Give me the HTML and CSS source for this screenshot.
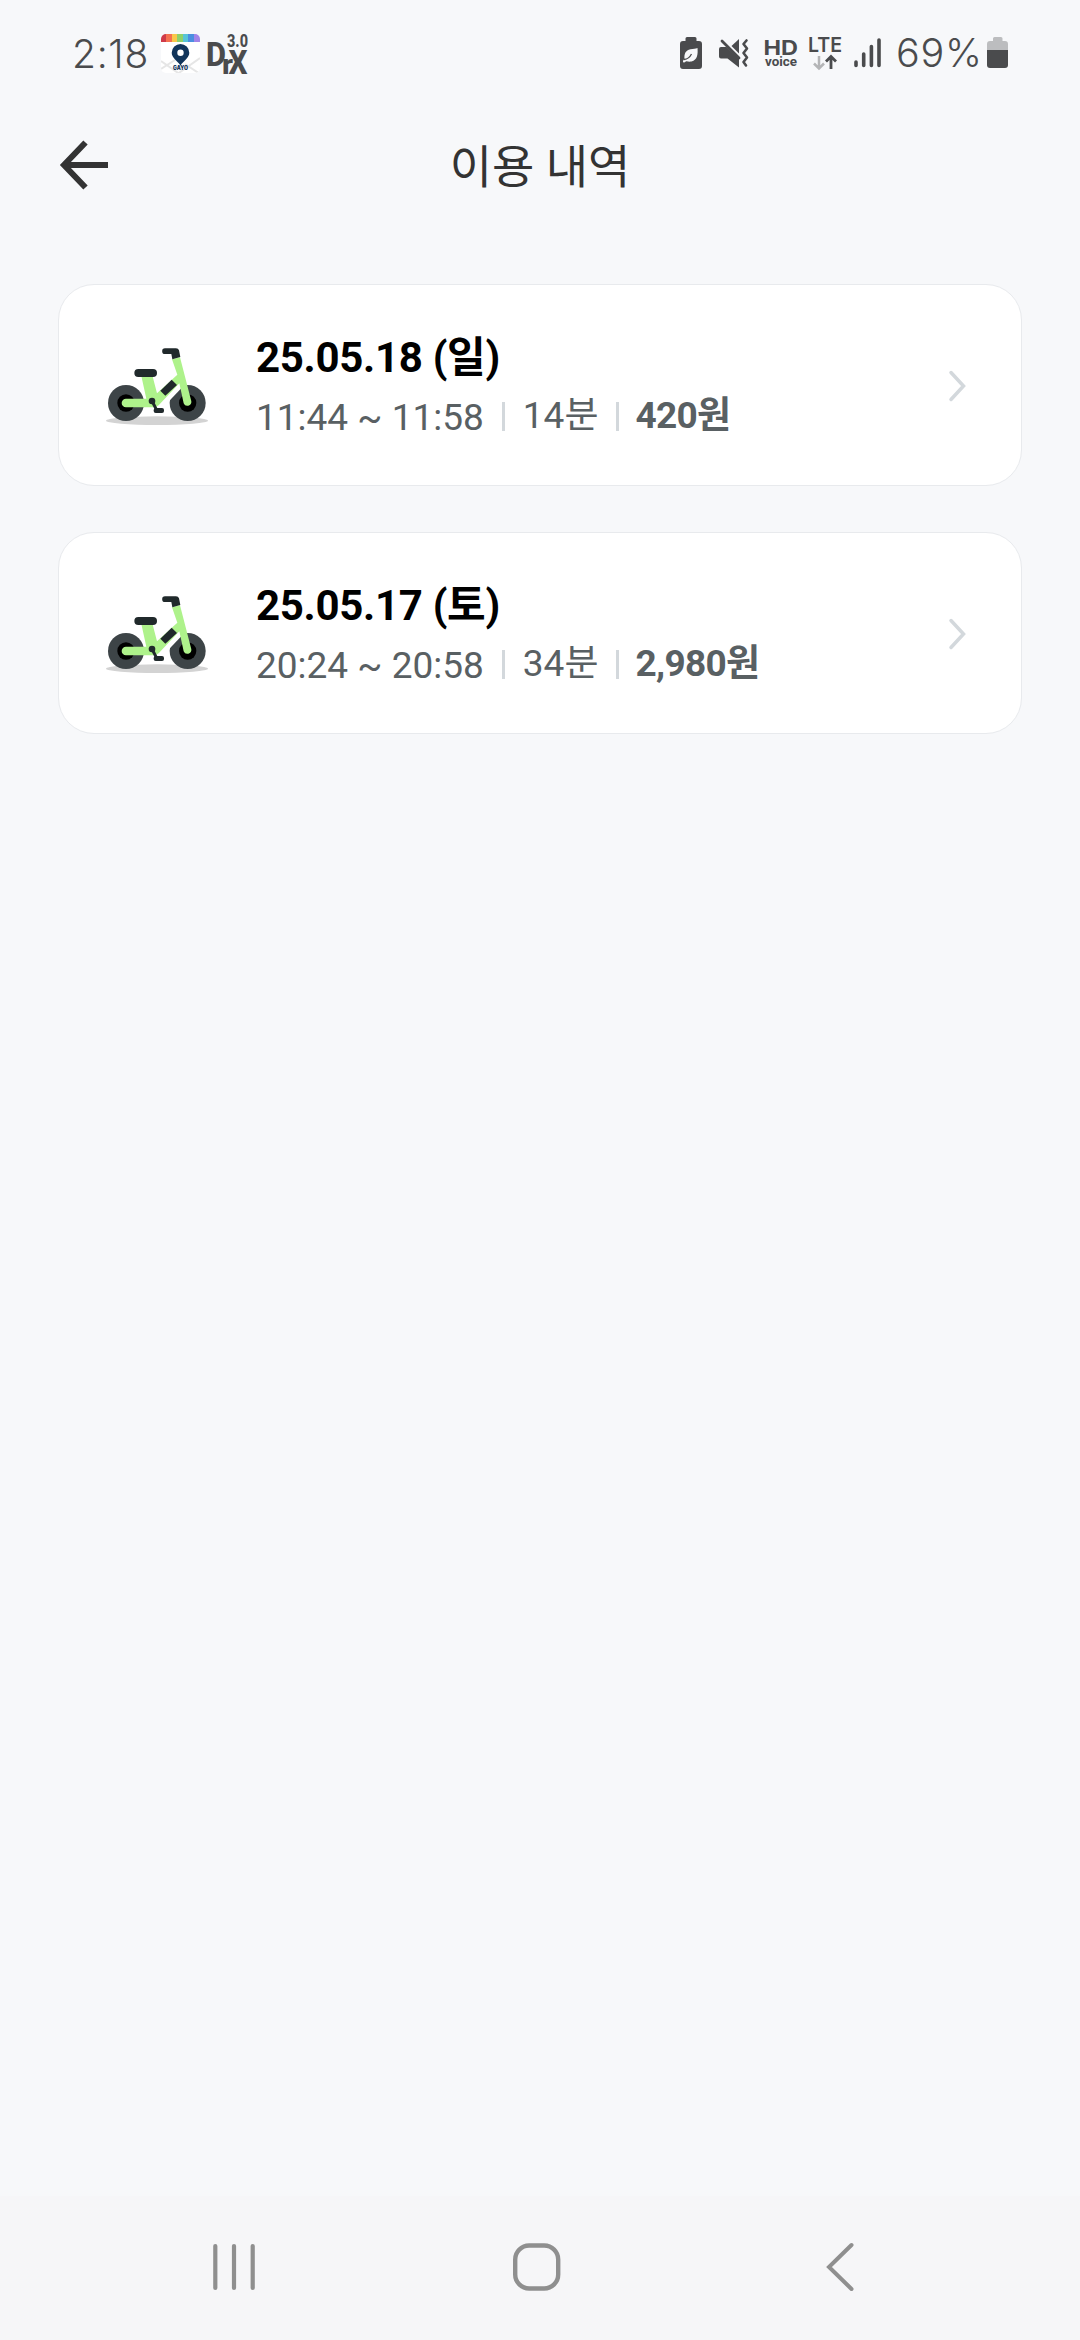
FILE: index.html
```html
<!DOCTYPE html>
<html lang="ko">
<head>
<meta charset="utf-8">
<title>이용 내역</title>
<link rel="stylesheet" href="styles.css">
</head>
<body>
<svg class="defs" width="0" height="0" aria-hidden="true">
  <symbol id="bike" viewBox="0 0 390 330">
    <ellipse cx="201" cy="272" rx="153" ry="13" fill="#d3d3d3"/>
    <circle cx="108" cy="219" r="54" fill="#3d4447"/>
    <circle cx="293" cy="219" r="54" fill="#3d4447"/>
    <circle cx="108" cy="219" r="26" fill="#000"/>
    <circle cx="293" cy="219" r="26" fill="#000"/>
    <path d="M192 222L262 148" stroke="#fff" stroke-width="34" fill="none" transform="translate(6 8)"/>
    <path d="M154 138L187 136L201 190L262 134L246 88L270 82L304 214A12 12 0 0 1 281 220L268 160L206 226Q199 232 190 232H108A13 13 0 0 1 108 206H169Z" fill="#aef28b"/>
    <path d="M211 182L245 149L261 165L226 197Z" fill="#20292b"/>
    <path d="M225 55H258Q265 55 267 61L271 81L247 88L244 72H225A8 8 0 0 1 225 55Z" fill="#20292b"/>
    <rect x="133" y="117" width="68" height="24" rx="12" fill="#20292b"/>
    <path d="M186 213L199 238" stroke="#20292b" stroke-width="9" fill="none"/>
    <circle cx="186" cy="213" r="10" fill="#20292b"/>
    <rect x="191" y="234" width="31" height="15" rx="6" fill="#20292b"/>
  </symbol>
</svg>
<div class="screen">
  <div class="status">
    <span class="clock">2:18</span>
    <svg class="app" width="39" height="39" viewBox="161 34 39 39">
      <clipPath id="appclip"><rect x="161" y="34" width="39" height="39" rx="5"/></clipPath>
      <g clip-path="url(#appclip)">
        <path fill="#fff" d="M161 34h39v39h-39z"/>
        <path d="M161 69l14-9M161 61l20 14M185 64l15 10M176 75l24-17" stroke="#e6e6e6" stroke-width="2"/>
        <path fill="#cf3a49" d="M161 34h5v8h-5z"/><path fill="#f57150" d="M166 34h6v8h-6z"/>
        <path fill="#fac74a" d="M172 34h5v8h-5z"/><path fill="#8fd16a" d="M177 34h6v8h-6z"/>
        <path fill="#58c4d8" d="M183 34h5v8h-5z"/><path fill="#4b8fe0" d="M188 34h6v8h-6z"/>
        <path fill="#a184e8" d="M194 34h6v8h-6z"/>
        <path fill="#12355b" fill-rule="evenodd" d="M180.500 44a8.800 8.800 0 0 1 8.800 8.800c0 5-5 7.500-8.800 12.700c-3.800-5.200-8.800-7.700-8.800-12.700a8.800 8.800 0 0 1 8.800-8.800zm0 5.500a3.200 3.200 0 1 0 0 6.400a3.200 3.200 0 0 0 0-6.400z"/>
        <text x="173" y="70" class="gayo" textLength="15" lengthAdjust="spacingAndGlyphs">GAYO</text>
      </g>
    </svg>
    <svg class="drx" width="42" height="42" viewBox="207 33 42 42">
      <text x="206" y="66" font-size="34" textLength="20" lengthAdjust="spacingAndGlyphs">D</text>
      <text x="222" y="73.500" font-size="27" textLength="11" lengthAdjust="spacingAndGlyphs">r</text>
      <text x="228.500" y="73.500" font-size="34" textLength="19" lengthAdjust="spacingAndGlyphs">X</text>
      <text x="227" y="46.500" font-size="17.500" textLength="21" lengthAdjust="spacingAndGlyphs">3.0</text>
    </svg>
    <span class="spacer"></span>
    <svg class="ico saver" width="22" height="33" viewBox="680 37 22 33">
      <path fill="#4a4b4d" d="M687 37h8q1.500 0 1.500 1.500V41H699q3 0 3 3v22q0 3-3 3h-16q-3 0-3-3V44q0-3 3-3h2.500v-2.500q0-1.500 1.500-1.500z"/>
      <path fill="#f7f8fa" d="M697.500 48c.5 6 0 12-6 13.500c-3 .500-4.500-.5-5.500 0c-1 .5-1.500 1-2.500 1q-1.500-1.500 1-3.500c-.5-5 1-9 6-9.800c3-.4 5-.2 7-1.200z"/>
      <path d="M684 59.500q5-.5 7.500-5.500" stroke="#4a4b4d" stroke-width="1.300" fill="none"/>
    </svg>
    <svg class="ico mute" width="32" height="31" viewBox="718 38 32 31">
      <path fill="#4a4b4d" d="M721 47h5.500L739 59v8.500L727.500 58.500H721q-2 0-2-2V49q0-2 2-2z"/>
      <path fill="#4a4b4d" d="M739 39v14.500L731.500 46z"/>
      <path d="M722 41L739 58" stroke="#4a4b4d" stroke-width="2.800" stroke-linecap="round"/>
      <path d="M746.500 40.500L743.500 44L747 48.500L743.500 53L747 57.500L743.500 62L746 65.500" stroke="#4a4b4d" stroke-width="2.600" stroke-linecap="round" stroke-linejoin="round" fill="none"/>
    </svg>
    <svg class="ico hd" width="34" height="32" viewBox="764 37 34 32">
      <text x="763.500" y="55" font-size="20" textLength="34.500" lengthAdjust="spacingAndGlyphs">HD</text>
      <text x="765" y="66" font-size="12.500" textLength="32" lengthAdjust="spacingAndGlyphs">voice</text>
    </svg>
    <svg class="ico lte" width="34" height="34" viewBox="808 36 34 34">
      <text x="808" y="52" font-size="20" textLength="34" lengthAdjust="spacingAndGlyphs">LTE</text>
      <path d="M819 56v12M814 63.500l5 5l5-5" stroke="#b4b5b7" stroke-width="2.500" fill="none"/>
      <path d="M831 69V56.500M826 61.500l5-5l5 5" stroke="#4a4b4d" stroke-width="2.800" fill="none"/>
    </svg>
    <svg class="ico signal" width="28" height="30" viewBox="854 38 28 30">
      <path d="M856 62v3.500M863.700 54v11.500M871.400 46.500v19M879 40v25.500" stroke="#4a4b4d" stroke-width="3.600" stroke-linecap="round"/>
    </svg>
    <span class="percent">69%</span>
    <svg class="ico batt" width="22" height="32" viewBox="987 37 22 32">
      <path fill="#bcbdbf" d="M987 50v-6q0-3 3-3h3v-2.500q0-1.500 1.500-1.500h6.500q1.500 0 1.500 1.500V41h2.500q3 0 3 3v6z"/>
      <path fill="#4a4b4d" d="M987 50h21v15q0 3-3 3h-15q-3 0-3-3z"/>
    </svg>
  </div>
  <header class="header">
    <svg class="back" width="50" height="50" viewBox="59 140 50 50">
      <path d="M108 165H65M85.500 142.500L64 165L85.500 187.500" stroke="#333" stroke-width="6" fill="none"/>
    </svg>
    <h1>이용 내역</h1>
  </header>
  <main class="list">
    <article class="card">
      <svg class="bike" width="130" height="110"><use href="#bike"/></svg>
      <div class="info">
        <h2>25.05.18 (일)</h2>
        <div class="meta"><span class="time">11:44 ~ 11:58</span><i></i><span class="dur">14분</span><i></i><b>420원</b></div>
      </div>
      <svg class="chev" width="20" height="32" viewBox="0 0 20 32"><path d="M3 2.500L15.500 16L3 29.500" stroke="#d3d8dc" stroke-width="3.500" fill="none" stroke-linecap="round"/></svg>
    </article>
    <article class="card">
      <svg class="bike" width="130" height="110"><use href="#bike"/></svg>
      <div class="info">
        <h2>25.05.17 (토)</h2>
        <div class="meta"><span class="time">20:24 ~ 20:58</span><i></i><span class="dur">34분</span><i></i><b>2,980원</b></div>
      </div>
      <svg class="chev" width="20" height="32" viewBox="0 0 20 32"><path d="M3 2.500L15.500 16L3 29.500" stroke="#d3d8dc" stroke-width="3.500" fill="none" stroke-linecap="round"/></svg>
    </article>
  </main>
  <nav class="nav">
    <svg width="50" height="50" viewBox="209 2242 50 50"><path d="M215.300 2246v42M234 2246v42M252.700 2246v42" stroke="#8f8f8f" stroke-width="4.200" stroke-linecap="round"/></svg>
    <svg width="50" height="50" viewBox="511 2242 50 50"><rect x="514.200" y="2245.500" width="43" height="43" rx="14" stroke="#8f8f8f" stroke-width="4.400" fill="none"/></svg>
    <svg width="50" height="50" viewBox="815 2242 50 50"><path d="M851.500 2245L829 2267L851.500 2289" stroke="#8f8f8f" stroke-width="4" stroke-linecap="round" fill="none"/></svg>
  </nav>
</div>
</body>
</html>
```
FILE: styles.css
```css
* { box-sizing: border-box; margin: 0; padding: 0; }
body { background: #f7f8fa; font-family: Roboto, "Noto Sans CJK KR", sans-serif; }
svg { display: block; flex: none; overflow: visible; }
.defs { height: 0; }
.screen { width: 1080px; height: 2340px; display: flex; flex-direction: column; overflow: hidden; }

.status { height: 106px; display: flex; align-items: center; padding: 0 71px 0 72px; color: #4a4b4d; font-family: Inter, sans-serif; }
.clock { width: 89px; font-size: 39px; font-weight: 350; letter-spacing: 0.7px; white-space: nowrap; }
.drx { margin-left: 7px; margin-top: 2px; }
.drx text { font-family: Roboto, sans-serif; font-weight: 800; fill: #4a4b4d; }
.gayo { font: 900 5.500px Inter, sans-serif; fill: #12355b; }
.spacer { flex: 1; }
.mute { margin-left: 16px; }
.hd { margin-left: 14px; }
.hd text, .lte text { font-family: Inter, sans-serif; font-weight: 700; fill: #4a4b4d; }
.hd text:last-child { font-family: Roboto, sans-serif; }
.lte text { font-weight: 600; }
.lte { margin-left: 10px; }
.signal { margin-left: 12px; }
.percent { margin-left: 14px; width: 91px; font-size: 39.5px; font-weight: 350; letter-spacing: 0.8px; white-space: nowrap; }

.header { height: 118px; display: grid; grid-template-columns: 50px 1fr 50px; align-items: center; padding: 0 59px; }
.header h1 { padding-top: 4px; text-align: center; font-size: 46px; font-weight: 400; color: #333; line-height: 60px; }

.list { flex: 1; display: flex; flex-direction: column; gap: 46px; padding: 60px 58px 0; }
.card { height: 202px; display: flex; align-items: center; background: #fff; border: 1px solid #e8eaed; border-radius: 36px; padding: 0 53px 0 31px; }
.info { flex: 1; margin-left: 36px; padding-top: 3px; }
.info h2 { font-size: 42px; font-weight: 700; line-height: 58px; letter-spacing: -0.3px; color: #000; }
.meta { display: flex; align-items: center; height: 58px; font-size: 37px; line-height: 54px; color: #596063; white-space: nowrap; }
.meta i { width: 3px; height: 29px; background: #d3d8dc; margin: 2px 18px 0; }
.meta .time { padding-top: 4px; }
.meta b { margin-left: -2px; letter-spacing: -0.7px; }
.chev { margin-top: 2px; }

.nav { height: 144px; display: flex; align-items: center; justify-content: space-between; padding: 0 215px 2px 209px; background: #f6f6f8; }
```
